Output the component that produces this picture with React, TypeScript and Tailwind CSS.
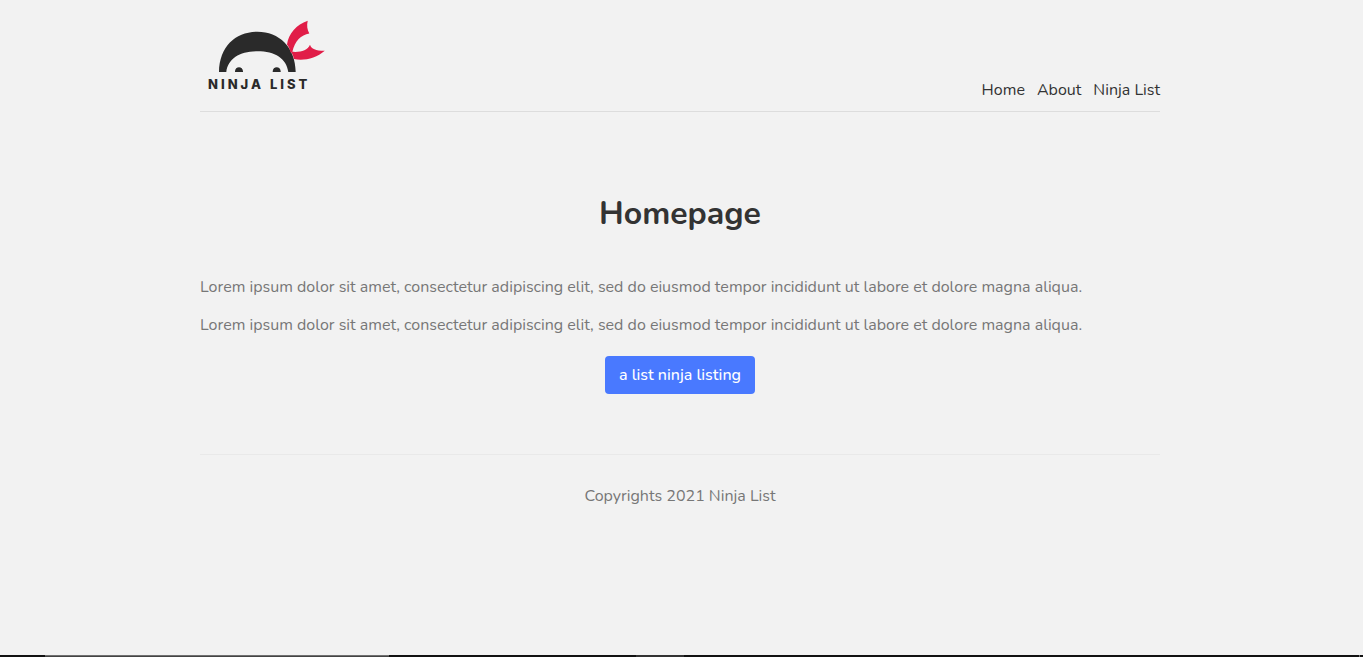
function Logo() {
  return (
    <svg viewBox="0 0 128 80" className="h-20 w-32" role="img" aria-label="Ninja List">
      <path
        fill="#2a2a2a"
        d="M19 56C19.500 30 36 15.700 57.500 15.700C79 15.700 95.500 31 95.700 56H88.300C86.500 42.500 75 35.300 57.500 35.300C40 35.300 28 42.500 26.300 56Z"
      />
      <path fill="#2a2a2a" d="M35 56C34.600 49.500 43.400 49.500 43 56ZM72.700 56C72.300 49.500 81.100 49.500 80.700 56Z" />
      <path
        fill="#e11d48"
        d="M87 28.500C88.500 17.500 96.500 8.500 107.700 4.700C106.600 9.500 107.200 13.500 109.300 17.600C101 19 95 25 92.300 36L90.500 36.500C90 33.500 88.700 30.500 87 28.500Z"
      />
      <path
        fill="#e11d48"
        d="M91 35.600C99.500 36.800 107.500 34.500 110 28.700C111.300 32.800 116 34.800 124.800 34.700C116 42.200 104 45.200 94 43C93.500 40.500 92.500 38 91 35.600Z"
      />
      <text x="8" y="73" fill="#2a2a2a" className="font-['Inter',sans-serif] text-[13px] font-extrabold tracking-[3px]">
        NINJA LIST
      </text>
    </svg>
  );
}

const links = ["Home", "About", "Ninja List"];
const lorem =
  "Lorem ipsum dolor sit amet, consectetur adipiscing elit, sed do eiusmod tempor incididunt ut labore et dolore magna aliqua.";

export default function App() {
  return (
    <div className="flex min-h-screen flex-col bg-[#f2f2f2] font-['Nunito','Lato',sans-serif] text-base leading-[22px] text-[#777]">
      <div className="w-full flex-1 pr-[3px]">
        <div className="mx-auto max-w-[960px]">
          <nav className="flex items-end justify-between border-b border-[#ddd] pt-4 pb-[10px]">
            <a href="#home" className="mb-[5px]">
              <Logo />
            </a>
            <div className="flex gap-3 text-[#333]">
              {links.map((label) => (
                <a key={label} href="#home">
                  {label}
                </a>
              ))}
            </div>
          </nav>
          <main className="flex flex-col pt-20 pb-[60px]">
            <h1 className="mb-10 text-center text-[32px] leading-[44px] font-bold text-[#333]">Homepage</h1>
            <p className="mb-4">{lorem}</p>
            <p className="mb-5">{lorem}</p>
            <a
              href="#list"
              className="w-[150px] self-center rounded bg-[#4979ff] py-2 text-center font-medium text-white"
            >
              a list ninja listing
            </a>
          </main>
          <footer className="border-t border-[#e9e9e9] pt-[30px] text-center">Copyrights 2021 Ninja List</footer>
        </div>
      </div>
      <div className="flex h-[2px] bg-[#111]">
        <div className="ml-[45px] w-[344px] border-t border-[#707070] bg-[#444]" />
        <div className="ml-[247px] w-12 bg-[#333]" />
        <div className="mr-[3px] ml-auto w-px bg-[#777]" />
      </div>
    </div>
  );
}
